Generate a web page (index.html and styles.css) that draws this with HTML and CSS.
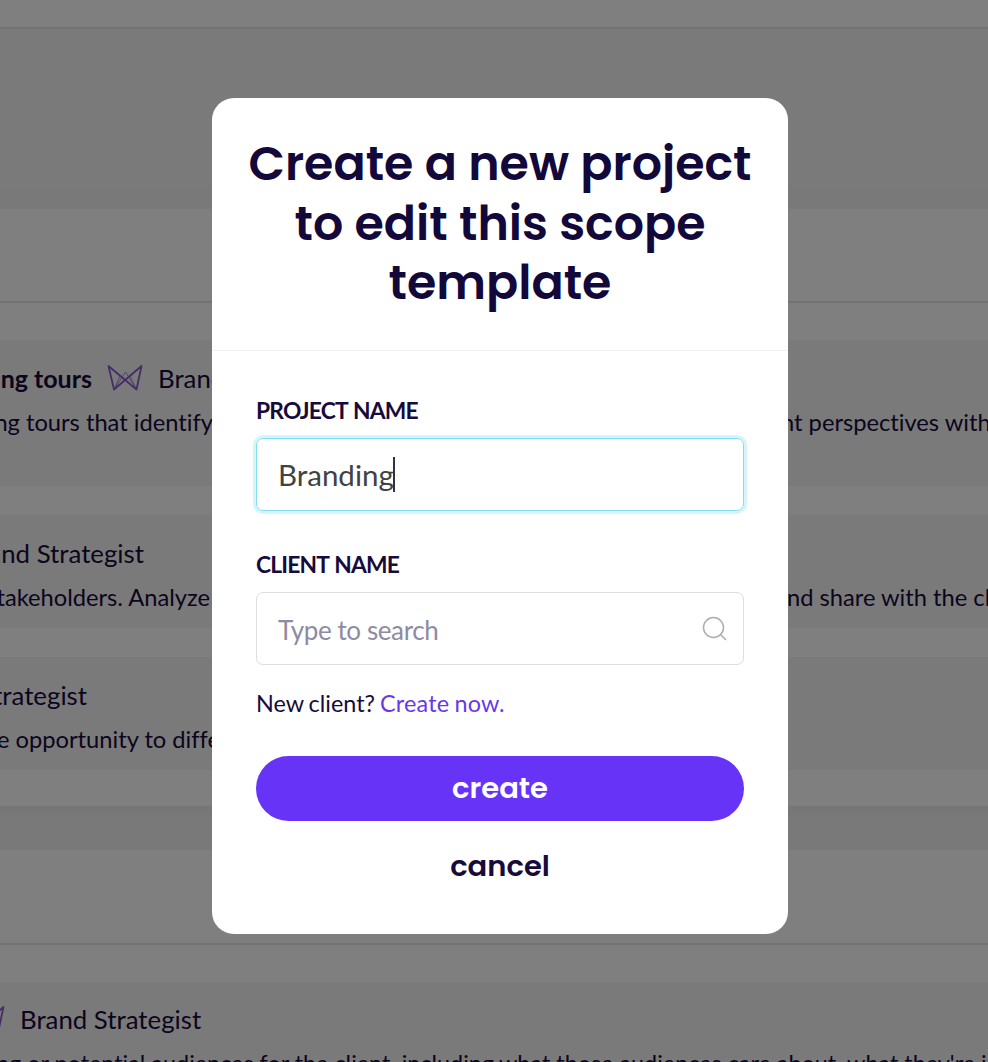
FILE: index.html
```html
<!DOCTYPE html>
<html lang="en">
<head>
<meta charset="utf-8">
<title>Create project</title>
<link rel="stylesheet" href="styles.css">
</head>
<body>
<div class="app">
  <main class="page">
    <div class="topbar"></div>
    <div class="hero"></div>
    <div class="panel-head first"></div>
    <section class="panel">
      <article class="card tall">
        <div class="role"><span class="before w92"><b class="t-tours">ng tours</b></span>
          <svg class="mark" viewBox="0 0 36 26"><path d="M1.5 1 7 24.5 34.5 1 29.5 24.5 1.5 1Z"/><path class="thin" d="M3 2.500 18 15 33 2.500M7 24.500 13 11M29.500 24.500 23 11M7 24.500 18.500 7 29.500 24.500"/></svg>
          <span class="t-role">Brand Strategist</span></div>
        <div class="desc"><span class="before w213">ng tours that identify</span><span class="after a785">nt perspectives with</span></div>
      </article>
      <article class="card">
        <div class="role"><span class="before w144">and Strategist</span></div>
        <div class="desc"><span class="before w210">takeholders. Analyze</span><span class="after a788">nd share with the cl</span></div>
      </article>
      <article class="card">
        <div class="role"><span class="before w86">trategist</span></div>
        <div class="desc"><span class="before w218">e opportunity to diffe</span></div>
      </article>
    </section>
    <div class="divider"></div>
    <div class="panel-head second"></div>
    <section class="panel">
      <article class="card last">
        <div class="role"><span class="before w5"><svg class="mark" viewBox="0 0 36 26"><path d="M1.5 1 7 24.5 34.5 1 29.5 24.5 1.5 1Z"/><path class="thin" d="M29.500 24.500 23 11M33 2.500 18 15"/></svg></span><span class="t-last">Brand Strategist</span></div>
        <div class="desc audience"><span class="before w494">ng or potential audiences for the client, including</span><span class="after-flow">what those audiences care about, what they're i</span></div>
      </article>
    </section>
  </main>
  <div class="overlay">
    <div class="modal" role="dialog">
      <header class="modal-head"><h1 class="title">Create a new project<br>to edit this scope<br>template</h1></header>
      <div class="form">
        <div class="label">PROJECT NAME</div>
        <div class="field focus"><span class="value">Branding</span><i class="caret"></i></div>
        <div class="label client">CLIENT NAME</div>
        <div class="field"><span class="placeholder">Type to search</span>
          <svg class="search" viewBox="0 0 26 26"><circle cx="11.500" cy="11.500" r="10"/><path d="M18.500 18.500 24 24"/></svg></div>
        <p class="hint">New client? <a class="link">Create now.</a></p>
        <div class="button"><span>create</span></div>
        <div class="cancel"><span>cancel</span></div>
      </div>
    </div>
  </div>
</div>
</body>
</html>
```
FILE: styles.css
```css
* { box-sizing: border-box; }
body { margin: 0; font-family: Lato, "Liberation Sans", sans-serif; font-variant-ligatures: none; color: #160b3a; }
.app { position: relative; width: 988px; height: 1062px; overflow: hidden; }
.page { display: flex; flex-direction: column; width: 988px; }
.topbar { height: 29px; flex: none; border-bottom: 2px solid #e4e4e6; }
.hero { height: 180px; background: linear-gradient(#f4f4f4 85%, #f2f2f5); }
.panel-head { border-bottom: 2px solid #e4e4e6; }
.first { height: 94px; }
.second { height: 95px; }
.panel { display: flex; flex-direction: column; gap: 29px; padding: 37px 0 36px; }
.card { height: 113px; background: #f4f4f4; padding-top: 20px; white-space: nowrap; overflow: hidden; }
.card.tall { height: 146px; }
.card.last { height: 115px; padding-top: 19px; }
.role { display: flex; align-items: center; height: 36px; font-size: 25.8px; }
.desc { display: flex; align-items: center; height: 32px; margin-top: 10px; font-size: 23.7px; }
.audience { font-size: 23.400px; }
.t-tours { font-size: 25px; }
.before { display: flex; justify-content: flex-end; flex: none; }
.w92 { width: 92px; } .w213 { width: 213px; } .w144 { width: 144px; }
.w210 { width: 210px; } .w86 { width: 87px; } .w218 { width: 220px; }
.w5 { width: 5px; } .w494 { width: 494px; }
.after { flex: none; }
.a785 { margin-left: 568px; }
.a788 { margin-left: 577px; }
.after-flow { margin-left: 5px; }
.mark { width: 36px; height: 26px; margin-left: 15px; flex: none; fill: none; stroke: #8a5bd0; stroke-width: 1.800; stroke-linejoin: round; }
.mark .thin { stroke-width: 1; opacity: .7; }
.t-role { margin-left: 15px; }
.t-last { margin-left: 15px; }
.divider { height: 44px; background: linear-gradient(#ececef, #f3f3f5 30%); }
.overlay { position: absolute; inset: 0; padding: 98px 200px 0 212px; background: rgba(0, 0, 0, .5); }
.modal { width: 576px; height: 836px; border-radius: 22px; background: #fff; }
.modal-head { height: 253px; padding-top: 36px; border-bottom: 1px solid #efeff1; }
.title { margin: 0; font: 600 47.5px/59.6px Poppins, Inter, sans-serif; text-align: center; white-space: nowrap; color: #12083a; }
.form { display: flex; flex-direction: column; padding: 44px 44px 0; }
.label { height: 30px; font-size: 22.800px; font-weight: 700; line-height: 30px; letter-spacing: -.8px; word-spacing: 1px; }
.field { display: flex; align-items: center; height: 73px; margin-top: 13px; padding: 0 15px 0 21px; border: 1px solid #dedee2; border-radius: 7px; }
.focus { border-color: #86dcf0; box-shadow: 0 0 0 3px #d5f5fd; }
.value { font-size: 29.5px; color: #424242; }
.caret { width: 2px; height: 35px; margin-left: -1px; background: #333; }
.client { margin-top: 38px; }
.placeholder { flex: 1; font-size: 26px; letter-spacing: -.4px; color: #8d8ba3; padding-top: 3px; }
.search { width: 26px; height: 26px; fill: none; stroke: #acabb7; stroke-width: 1.500; }
.hint { margin: 22px 0 0; height: 32px; font-size: 23.4px; line-height: 32px; word-spacing: -1px; }
.link { color: #6837ed; letter-spacing: .2px; }
.button, .cancel { display: flex; justify-content: center; align-items: center; font: 600 29px/40px Poppins, Inter, sans-serif; }
.button { height: 65px; margin-top: 37px; padding-bottom: 1px; border-radius: 33px; background: #6633f7; color: #fff; }
.cancel { height: 40px; margin-top: 25px; }
```
